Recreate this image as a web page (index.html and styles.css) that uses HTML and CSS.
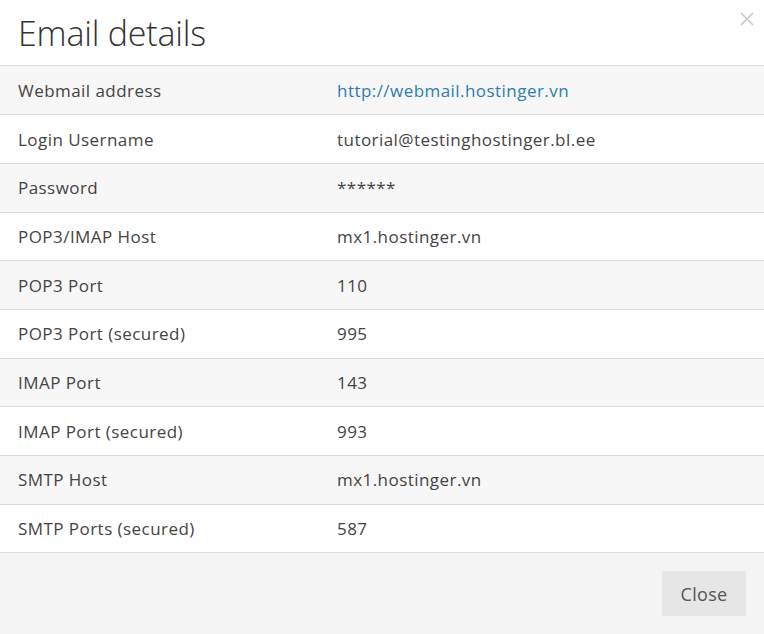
FILE: index.html
```html
<!DOCTYPE html>
<html>
<head>
<meta charset="utf-8">
<link rel="stylesheet" href="styles.css">
</head>
<body>
<div class="modal">
  <div class="modal-header">
    <h1 class="title">Email details</h1>
    <svg class="close-x" width="14" height="14" viewBox="0 0 14 14"><path d="M1 1 L13 13 M13 1 L1 13" stroke="#c8c8c8" stroke-width="1.6" fill="none"/></svg>
  </div>
  <table class="details">
    <tr><td class="label">Webmail address</td><td class="value"><a href="#" class="link">http://webmail.hostinger.vn</a></td></tr>
    <tr><td class="label">Login Username</td><td class="value">tutorial@testinghostinger.bl.ee</td></tr>
    <tr><td class="label">Password</td><td class="value">******</td></tr>
    <tr><td class="label">POP3/IMAP Host</td><td class="value">mx1.hostinger.vn</td></tr>
    <tr><td class="label">POP3 Port</td><td class="value">110</td></tr>
    <tr><td class="label">POP3 Port (secured)</td><td class="value">995</td></tr>
    <tr><td class="label">IMAP Port</td><td class="value">143</td></tr>
    <tr><td class="label">IMAP Port (secured)</td><td class="value">993</td></tr>
    <tr><td class="label">SMTP Host</td><td class="value">mx1.hostinger.vn</td></tr>
    <tr><td class="label">SMTP Ports (secured)</td><td class="value">587</td></tr>
  </table>
  <div class="modal-footer">
    <button class="btn">Close</button>
  </div>
</div>
</body>
</html>
```
FILE: styles.css
```css
html, body {
  margin: 0;
  padding: 0;
  background: #fff;
}
body {
  font-family: "Open Sans", "Liberation Sans", sans-serif;
  color: #444;
}
.modal {
  width: 764px;
  height: 634px;
  display: flex;
  flex-direction: column;
  background: #fff;
}
.modal-header {
  height: 66px;
  display: flex;
  justify-content: space-between;
  align-items: flex-start;
  padding: 0 10px 0 18px;
  border-bottom: 1px solid #dcdcdc;
  box-sizing: border-box;
}
.title {
  margin: 12px 0 0;
  font-size: 34px;
  font-weight: 300;
  color: #333;
  line-height: 42px;
  letter-spacing: -0.2px;
}
.close-x {
  margin-top: 12px;
}
.details {
  width: 100%;
  border-collapse: collapse;
  font-size: 17px;
  letter-spacing: 0.45px;
}
.details tr {
  height: 48.7px;
  border-bottom: 1px solid #dcdcdc;
}
.details tr:nth-child(odd) {
  background: #f7f7f7;
}
.details td {
  padding: 0;
  vertical-align: middle;
  color: #444;
}
.label {
  width: 319px;
  padding-left: 18px !important;
}
.link {
  color: #2e7cb0;
  text-decoration: none;
}
.modal-footer {
  flex: 1;
  background: #f4f4f4;
  display: flex;
  justify-content: flex-end;
  align-items: flex-start;
  padding: 18px 18px 0 0;
}
.btn {
  width: 84px;
  height: 45px;
  border: none;
  background: #e6e6e6;
  color: #555;
  font-family: "Open Sans", "Liberation Sans", sans-serif;
  font-size: 18px;
  letter-spacing: 0.3px;
  padding: 0;
}
```
